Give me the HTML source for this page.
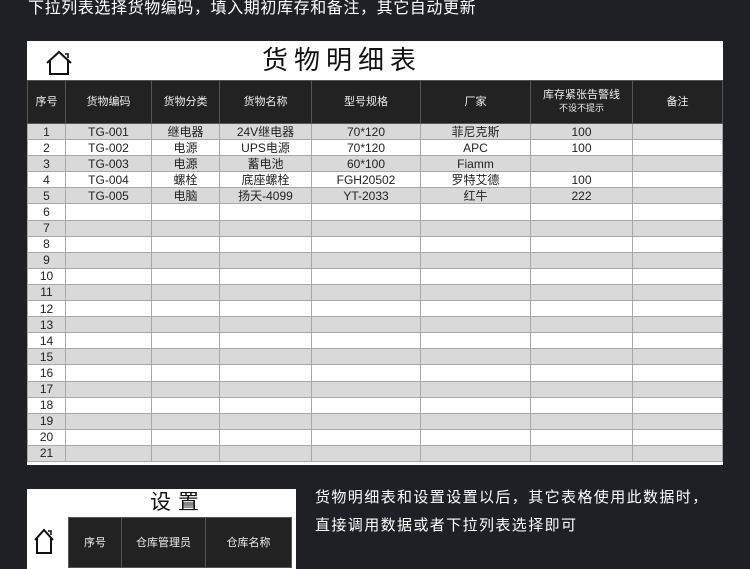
<!DOCTYPE html><html><head><meta charset="utf-8"><style>
*{margin:0;padding:0;box-sizing:border-box}
body{width:750px;height:563px;overflow:hidden;background:#1f2025;font-family:"Liberation Sans","Noto Sans CJK SC",sans-serif;position:relative}
.top{position:absolute;left:28px;top:-6px;color:#fff;font-size:16px;letter-spacing:.6px}
.panel{position:absolute;left:27px;top:41px;width:696px;height:424px;background:#fff}
.title{position:absolute;left:235px;top:0;height:39px;font-size:26px;line-height:39px;letter-spacing:6px;color:#111}
table{border-collapse:collapse;position:absolute;table-layout:fixed}
td,th{border:1px solid #a8a8a8;text-align:center;font-size:12px;line-height:14px;color:#222;font-weight:normal;overflow:hidden;white-space:nowrap;padding:0}
th{background:#222;color:#eee;border-color:#555;font-size:11px}
tr.g td{background:#d9d9d9}
tr.w td{background:#fff}
tr.g,tr.w{height:16.1px}
.right{position:absolute;left:315px;top:484px;color:#fff;font-size:15px;line-height:28px;letter-spacing:1.4px}
</style></head><body>
<div class="top">下拉列表选择货物编码，填入期初库存和备注，其它自动更新</div>
<div class="panel">
<svg style="position:absolute;left:18px;top:9px" width="30" height="26" viewBox="0 0 30 26"><path d="M2 13 L14 2 L26 13 M5 10 V24 H23 V10" fill="none" stroke="#111" stroke-width="2"/><path d="M20 4 H23 V8" fill="none" stroke="#111" stroke-width="1.6"/></svg>
<div class="title">货物明细表</div>
<table style="left:0;top:39px;width:695px">
<colgroup><col style="width:38px"><col style="width:86px"><col style="width:68px"><col style="width:92px"><col style="width:109px"><col style="width:110px"><col style="width:102px"><col style="width:90px"></colgroup>
<tr style="height:43px"><th>序号</th><th>货物编码</th><th>货物分类</th><th>货物名称</th><th>型号规格</th><th>厂家</th><th style="line-height:13px">库存紧张告警线<br><span style="font-size:9px">不设不提示</span></th><th>备注</th></tr>
<tr class="g"><td>1</td><td>TG-001</td><td>继电器</td><td>24V继电器</td><td>70*120</td><td>菲尼克斯</td><td>100</td><td></td></tr>
<tr class="w"><td>2</td><td>TG-002</td><td>电源</td><td>UPS电源</td><td>70*120</td><td>APC</td><td>100</td><td></td></tr>
<tr class="g"><td>3</td><td>TG-003</td><td>电源</td><td>蓄电池</td><td>60*100</td><td>Fiamm</td><td></td><td></td></tr>
<tr class="w"><td>4</td><td>TG-004</td><td>螺栓</td><td>底座螺栓</td><td>FGH20502</td><td>罗特艾德</td><td>100</td><td></td></tr>
<tr class="g"><td>5</td><td>TG-005</td><td>电脑</td><td>扬天-4099</td><td>YT-2033</td><td>红牛</td><td>222</td><td></td></tr>
<tr class="w"><td>6</td><td></td><td></td><td></td><td></td><td></td><td></td><td></td></tr>
<tr class="g"><td>7</td><td></td><td></td><td></td><td></td><td></td><td></td><td></td></tr>
<tr class="w"><td>8</td><td></td><td></td><td></td><td></td><td></td><td></td><td></td></tr>
<tr class="g"><td>9</td><td></td><td></td><td></td><td></td><td></td><td></td><td></td></tr>
<tr class="w"><td>10</td><td></td><td></td><td></td><td></td><td></td><td></td><td></td></tr>
<tr class="g"><td>11</td><td></td><td></td><td></td><td></td><td></td><td></td><td></td></tr>
<tr class="w"><td>12</td><td></td><td></td><td></td><td></td><td></td><td></td><td></td></tr>
<tr class="g"><td>13</td><td></td><td></td><td></td><td></td><td></td><td></td><td></td></tr>
<tr class="w"><td>14</td><td></td><td></td><td></td><td></td><td></td><td></td><td></td></tr>
<tr class="g"><td>15</td><td></td><td></td><td></td><td></td><td></td><td></td><td></td></tr>
<tr class="w"><td>16</td><td></td><td></td><td></td><td></td><td></td><td></td><td></td></tr>
<tr class="g"><td>17</td><td></td><td></td><td></td><td></td><td></td><td></td><td></td></tr>
<tr class="w"><td>18</td><td></td><td></td><td></td><td></td><td></td><td></td><td></td></tr>
<tr class="g"><td>19</td><td></td><td></td><td></td><td></td><td></td><td></td><td></td></tr>
<tr class="w"><td>20</td><td></td><td></td><td></td><td></td><td></td><td></td><td></td></tr>
<tr class="g"><td>21</td><td></td><td></td><td></td><td></td><td></td><td></td><td></td></tr>
</table>
</div>
<div style="position:absolute;left:27px;top:489px;width:269px;height:80px;background:#fff">
<div style="position:absolute;left:123px;top:0;font-size:21px;line-height:28px;letter-spacing:7px;color:#111">设置</div>
<svg style="position:absolute;left:6px;top:38px" width="24" height="28" viewBox="0 0 24 28"><path d="M2 13 L11 3 L20 13 M4 11 V26 H18 V11" fill="none" stroke="#111" stroke-width="2"/><path d="M15 4 H18 V8" fill="none" stroke="#111" stroke-width="1.5"/></svg>
<table style="left:41px;top:28px;width:223px">
<colgroup><col style="width:53px"><col style="width:84px"><col style="width:86px"></colgroup>
<tr style="height:50px"><th>序号</th><th>仓库管理员</th><th>仓库名称</th></tr>
</table>
</div>
<div class="right">货物明细表和设置设置以后，其它表格使用此数据时，<br>直接调用数据或者下拉列表选择即可</div>
</body></html>
